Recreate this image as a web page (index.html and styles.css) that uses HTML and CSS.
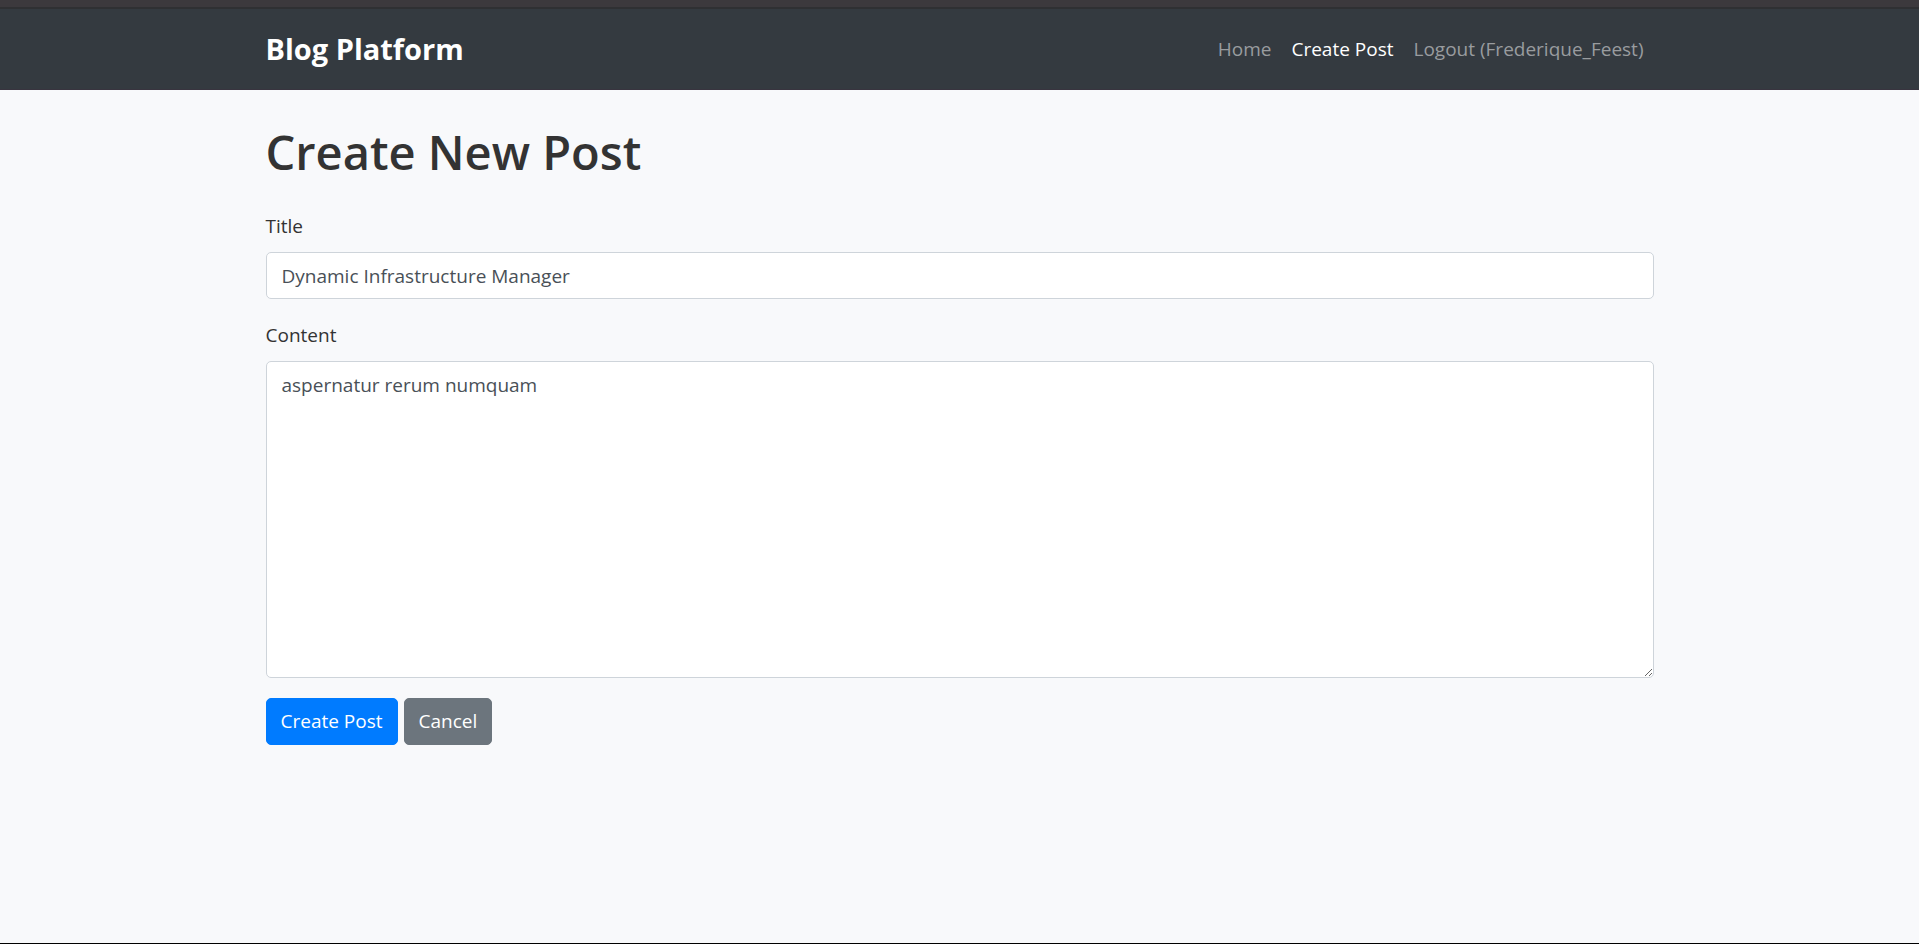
FILE: index.html
```html
<!DOCTYPE html>
<html lang="en">
<head>
<meta charset="utf-8">
<meta name="viewport" content="width=device-width, initial-scale=1">
<title>Create New Post</title>
<link rel="stylesheet" href="styles.css">
</head>
<body>
<header class="navbar">
  <div class="container navbar-inner">
    <a class="brand" href="#">Blog Platform</a>
    <nav class="nav">
      <a class="nav-link" href="#">Home</a>
      <a class="nav-link active" href="#" aria-current="page">Create Post</a>
      <a class="nav-link" href="#">Logout (Frederique_Feest)</a>
    </nav>
  </div>
</header>
<main class="container main">
  <h1 class="page-title">Create New Post</h1>
  <form>
    <div class="form-group">
      <label for="title">Title</label>
      <input class="form-control" id="title" type="text" value="Dynamic Infrastructure Manager">
    </div>
    <div class="form-group">
      <label for="content">Content</label>
      <textarea class="form-control content" id="content" spellcheck="false">aspernatur rerum numquam</textarea>
    </div>
    <div class="actions">
      <button class="btn primary" type="submit">Create Post</button>
      <a class="btn secondary" href="#">Cancel</a>
    </div>
  </form>
</main>
</body>
</html>
```
FILE: styles.css
```css
* {
  box-sizing: border-box;
}

body {
  display: flex;
  flex-direction: column;
  min-height: 100vh;
  margin: 0;
  border-top: 7px solid #3c393d;
  border-bottom: 1px solid #000;
  background: #f8f9fb;
  color: #333;
  font: 19px/30px "Segoe UI", "Open Sans", "Noto Sans", sans-serif;
}

.container {
  width: 100%;
  max-width: 1428px;
  margin: 0 auto;
  padding: 0 20px;
}

.navbar {
  padding: 15px 0;
  border-top: 2px solid #2f3033;
  border-bottom: 1px solid #38343f;
  background: #343a40;
}

.navbar-inner {
  display: flex;
  align-items: center;
  justify-content: space-between;
}

.brand {
  color: #fff;
  font-size: 29px;
  font-weight: 700;
  line-height: 48px;
  text-decoration: none;
}

.nav {
  display: flex;
}

.nav-link {
  padding: 10px;
  color: #999c9f;
  text-decoration: none;
}

.nav-link.active {
  color: #fff;
}

.main {
  padding-top: 32px;
}

.page-title {
  margin: 0 0 28px;
  font-size: 47px;
  font-weight: 600;
  line-height: 60px;
}

.form-group {
  display: flex;
  flex-direction: column;
  gap: 10px;
  margin-bottom: 20px;
}

.form-group label {
  line-height: 32px;
}

.form-control {
  width: 100%;
  height: 47px;
  margin: 0;
  padding: 8px 15px;
  border: 1px solid #ced4da;
  border-radius: 5px;
  outline: none;
  background: #fff;
  color: #495057;
  font: inherit;
}

.form-control.content {
  height: 317px;
  resize: vertical;
}

.actions {
  display: flex;
  gap: 6px;
}

.btn {
  padding: 8px 14px;
  border: 1px solid transparent;
  border-radius: 5px;
  color: #fff;
  font: inherit;
  line-height: 29px;
  text-decoration: none;
}

.primary {
  border-color: #007bff;
  background: #007bff;
}

.secondary {
  border-color: #6c757d;
  background: #6c757d;
}
```
